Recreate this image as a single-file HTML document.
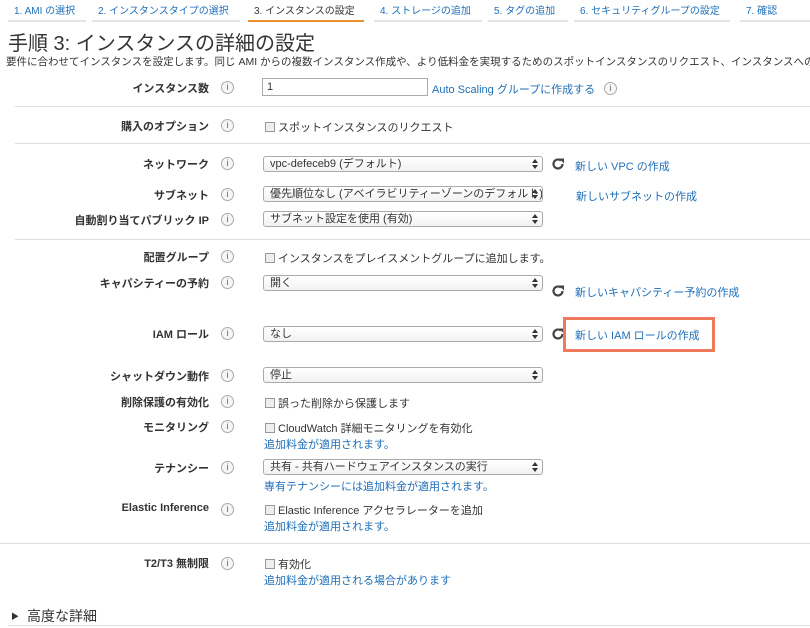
<!DOCTYPE html>
<html style="overflow:hidden"><head><meta charset="utf-8">
<style>
body{margin:0;width:810px;height:628px;overflow:hidden;background:#fff;font-family:"Liberation Sans","Noto Sans CJK JP",sans-serif;color:#333;position:relative}
.a{position:absolute;white-space:nowrap}
.tab{position:absolute;top:0;height:18px;font-size:10px;color:#1f6fb8;border-bottom:2px solid #e4e4e4;padding-top:2px;box-sizing:content-box;white-space:nowrap;overflow:hidden}
.tab.act{color:#333;border-bottom:2px solid #ec8f2e}
.lbl{position:absolute;right:601px;font-size:11px;font-weight:bold;color:#333;white-space:nowrap}
.i{position:absolute;left:221px;width:11px;height:11px;border:1px solid #aaa;border-radius:50%;font-size:9px;line-height:11px;text-align:center;color:#666;background:#f6f6f6}
.sel{position:absolute;left:263px;width:260px;padding-right:12px;height:14px;border:1px solid #aaa;border-radius:3px;font-size:11px;line-height:14px;padding-left:6px;overflow:hidden;white-space:nowrap;background:linear-gradient(#fff,#f2f2f2)}
.sel:after{content:"";position:absolute;right:4px;top:2px;border-left:3px solid transparent;border-right:3px solid transparent;border-bottom:4px solid #333;}
.sel:before{content:"";position:absolute;right:4px;top:8px;border-left:3px solid transparent;border-right:3px solid transparent;border-top:4px solid #333;}
.cb{position:absolute;font-size:11px;white-space:nowrap}
.cb span{display:inline-block;width:8px;height:8px;border:1px solid #999;background:#eee;margin-right:3px;vertical-align:-1px}
.lk{position:absolute;font-size:11px;color:#1f6fb8;white-space:nowrap}
.hr{position:absolute;left:15px;right:0;height:1px;background:#ddd}
.rf{position:absolute;left:551px;width:14px;height:14px}
</style></head><body>
<div class="tab" style="left:8px;width:72px;padding-left:6px">1. AMI の選択</div>
<div class="tab" style="left:92px;width:142px;padding-left:6px">2. インスタンスタイプの選択</div>
<div class="tab act" style="left:248px;width:110px;padding-left:6px">3. インスタンスの設定</div>
<div class="tab" style="left:374px;width:102px;padding-left:6px">4. ストレージの追加</div>
<div class="tab" style="left:488px;width:74px;padding-left:6px">5. タグの追加</div>
<div class="tab" style="left:574px;width:150px;padding-left:6px">6. セキュリティグループの設定</div>
<div class="tab" style="left:740px;width:70px;padding-left:6px">7. 確認</div>
<div class="a" style="left:8px;top:27px;font-size:20px;color:#333">手順 3: インスタンスの詳細の設定</div>
<div class="a" style="left:6px;top:54px;font-size:10.5px;color:#333">要件に合わせてインスタンスを設定します。同じ AMI からの複数インスタンス作成や、より低料金を実現するためのスポットインスタンスのリクエスト、インスタンスへの</div>

<div class="lbl" style="top:80px">インスタンス数</div><div class="i" style="top:81px">i</div>
<div class="a" style="left:262px;top:78px;width:160px;height:16px;border:1px solid #aaa;font-size:11px;line-height:16px;padding-left:4px">1</div>
<div class="lk" style="left:432px;top:81px">Auto Scaling グループに作成する</div><div class="i" style="top:82px;left:604px">i</div>
<div class="hr" style="top:106px"></div>

<div class="lbl" style="top:118px">購入のオプション</div><div class="i" style="top:119px">i</div>
<div class="cb" style="left:265px;top:119px"><span></span>スポットインスタンスのリクエスト</div>
<div class="hr" style="top:143px"></div>

<div class="lbl" style="top:156px">ネットワーク</div><div class="i" style="top:157px">i</div>
<div class="sel" style="top:156px">vpc-defeceb9 (デフォルト)</div>
<svg class="rf" style="top:157px" viewBox="0 0 14 14"><path d="M11.5 7a4.5 4.5 0 1 1-1.5-3.4" fill="none" stroke="#444" stroke-width="2.2"/><path d="M8 1.5h5v5z" fill="#444"/></svg>
<div class="lk" style="left:575px;top:158px">新しい VPC の作成</div>
<div class="lbl" style="top:187px">サブネット</div><div class="i" style="top:188px">i</div>
<div class="sel" style="top:186px">優先順位なし (アベイラビリティーゾーンのデフォルト)</div>
<div class="lk" style="left:576px;top:188px">新しいサブネットの作成</div>
<div class="lbl" style="top:212px">自動割り当てパブリック IP</div><div class="i" style="top:213px">i</div>
<div class="sel" style="top:211px">サブネット設定を使用 (有効)</div>
<div class="hr" style="top:239px"></div>

<div class="lbl" style="top:249px">配置グループ</div><div class="i" style="top:250px">i</div>
<div class="cb" style="left:265px;top:250px"><span></span>インスタンスをプレイスメントグループに追加します。</div>
<div class="lbl" style="top:275px">キャパシティーの予約</div><div class="i" style="top:276px">i</div>
<div class="sel" style="top:275px">開く</div>
<svg class="rf" style="top:284px" viewBox="0 0 14 14"><path d="M11.5 7a4.5 4.5 0 1 1-1.5-3.4" fill="none" stroke="#444" stroke-width="2.2"/><path d="M8 1.5h5v5z" fill="#444"/></svg>
<div class="lk" style="left:575px;top:284px">新しいキャパシティー予約の作成</div>

<div class="lbl" style="top:326px">IAM ロール</div><div class="i" style="top:327px">i</div>
<div class="sel" style="top:326px">なし</div>
<svg class="rf" style="top:327px" viewBox="0 0 14 14"><path d="M11.5 7a4.5 4.5 0 1 1-1.5-3.4" fill="none" stroke="#444" stroke-width="2.2"/><path d="M8 1.5h5v5z" fill="#444"/></svg>
<div class="a" style="left:563px;top:317px;width:152px;height:35px;border:3px solid #f07a5c;box-sizing:border-box"></div>
<div class="lk" style="left:575px;top:327px">新しい IAM ロールの作成</div>

<div class="lbl" style="top:368px">シャットダウン動作</div><div class="i" style="top:369px">i</div>
<div class="sel" style="top:367px">停止</div>
<div class="lbl" style="top:394px">削除保護の有効化</div><div class="i" style="top:395px">i</div>
<div class="cb" style="left:265px;top:395px"><span></span>誤った削除から保護します</div>
<div class="lbl" style="top:419px">モニタリング</div><div class="i" style="top:420px">i</div>
<div class="cb" style="left:265px;top:420px"><span></span>CloudWatch 詳細モニタリングを有効化</div>
<div class="lk" style="left:264px;top:436px">追加料金が適用されます。</div>
<div class="lbl" style="top:460px">テナンシー</div><div class="i" style="top:461px">i</div>
<div class="sel" style="top:459px">共有 - 共有ハードウェアインスタンスの実行</div>
<div class="lk" style="left:264px;top:478px">専有テナンシーには追加料金が適用されます。</div>
<div class="lbl" style="top:502px">Elastic Inference</div><div class="i" style="top:503px">i</div>
<div class="cb" style="left:265px;top:502px"><span></span>Elastic Inference アクセラレーターを追加</div>
<div class="lk" style="left:264px;top:518px">追加料金が適用されます。</div>
<div class="hr" style="top:543px;left:0"></div>
<div class="lbl" style="top:555px">T2/T3 無制限</div><div class="i" style="top:557px">i</div>
<div class="cb" style="left:265px;top:556px"><span></span>有効化</div>
<div class="lk" style="left:264px;top:572px">追加料金が適用される場合があります</div>

<div class="a" style="left:11px;top:611px;font-size:8px;color:#333">▶</div>
<div class="a" style="left:27px;top:606px;font-size:14px;color:#333">高度な詳細</div>
<div class="hr" style="top:625px;left:8px"></div>
</body></html>
